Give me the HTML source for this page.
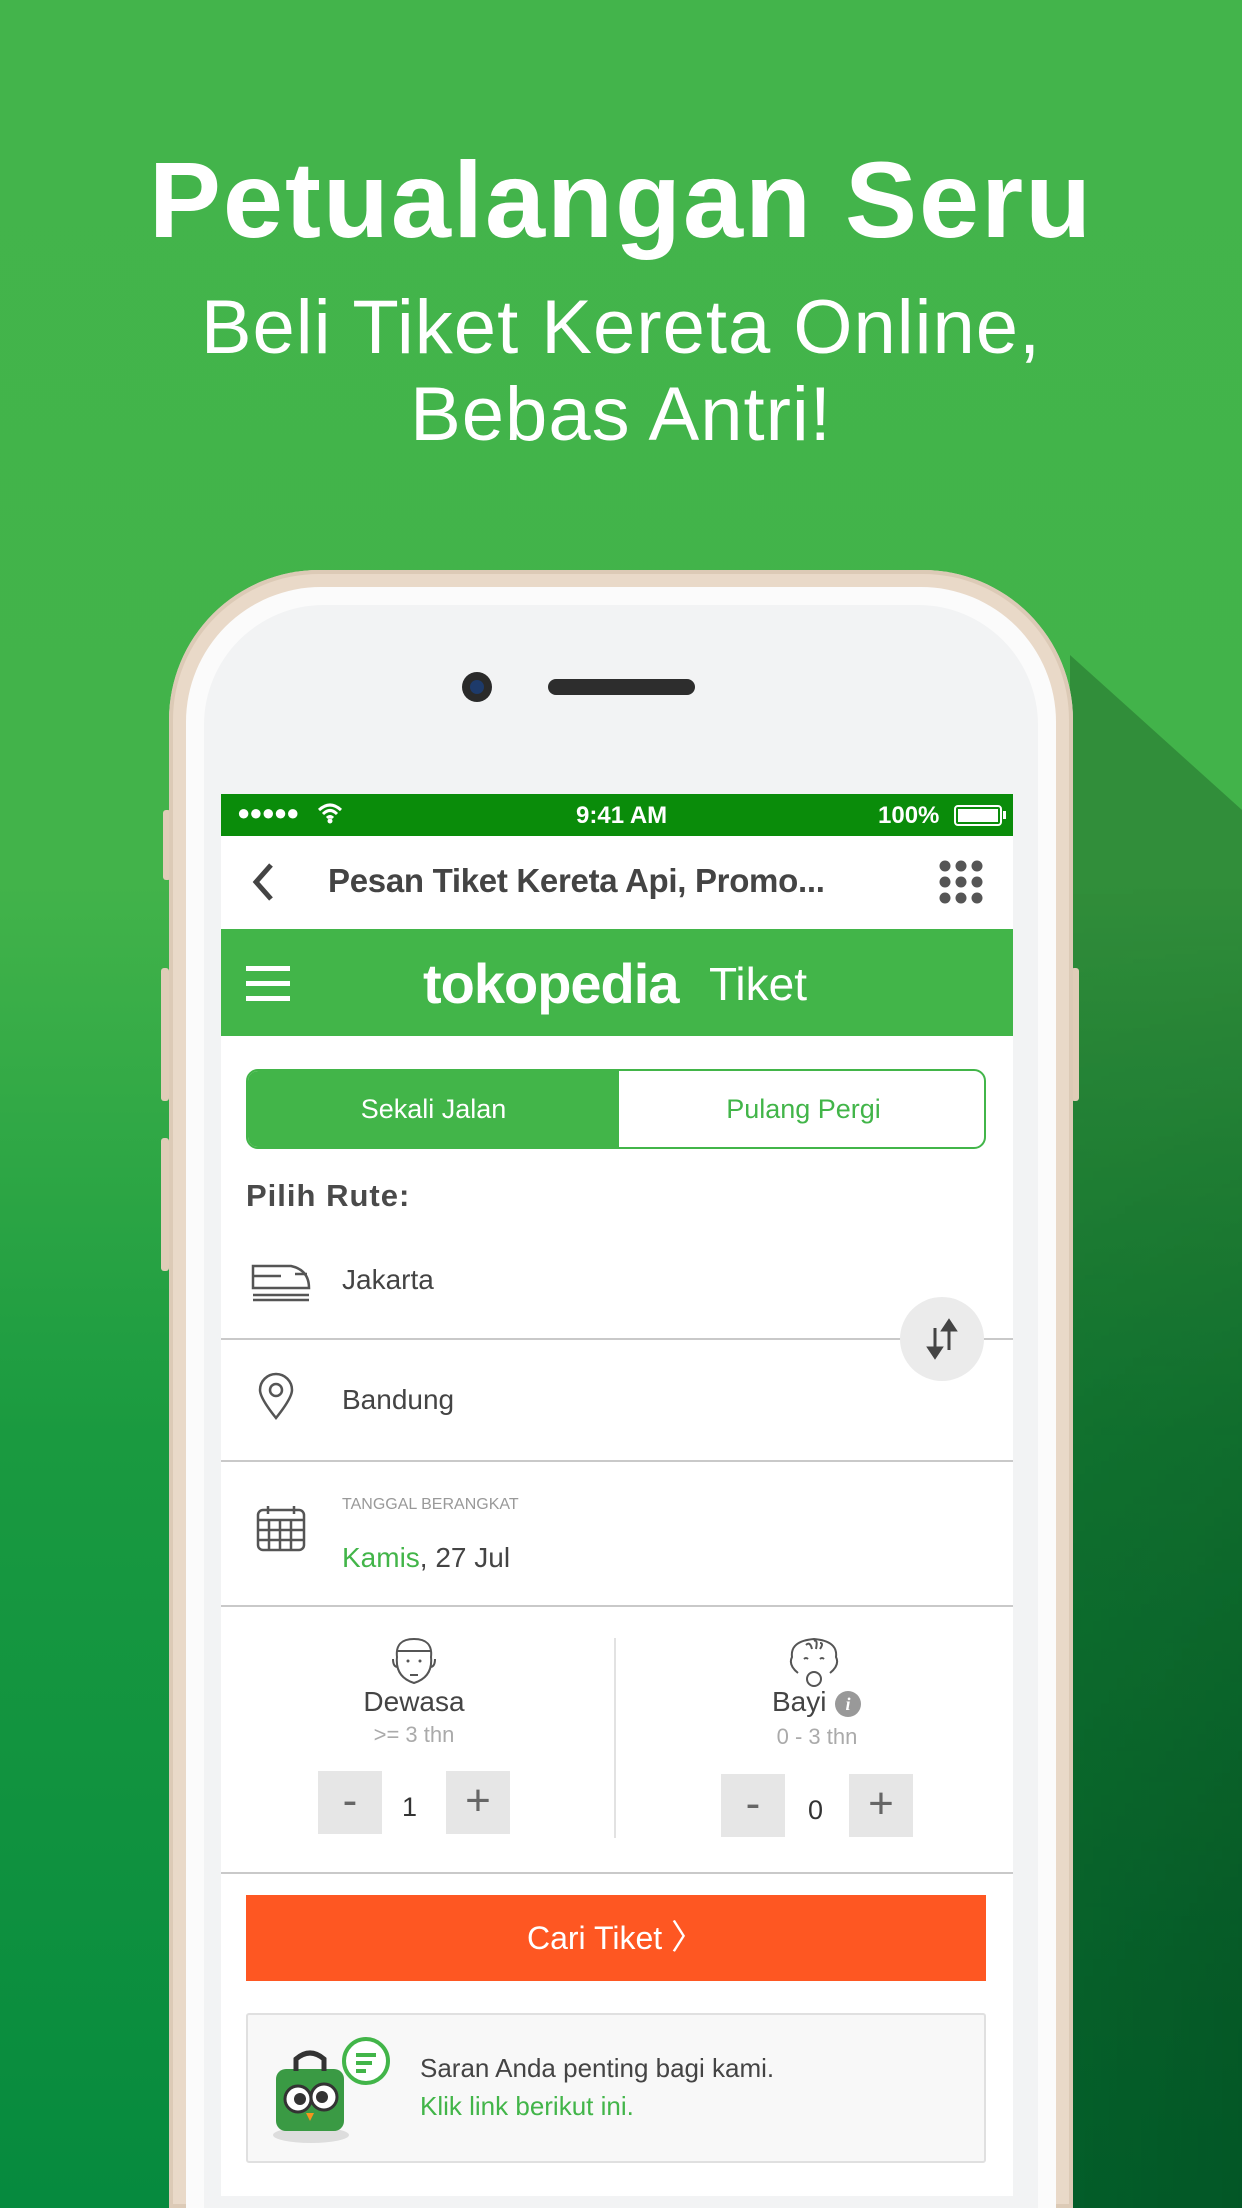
<!DOCTYPE html>
<html style="width:1242px;height:2208px;overflow:hidden"><head><meta charset="utf-8"><style>
*{margin:0;padding:0;box-sizing:border-box}
body{width:1242px;height:2208px;overflow:hidden;position:relative;font-family:"Liberation Sans",sans-serif;background:#42b34a}
.abs{position:absolute}
.bg{left:0;top:0;width:1242px;height:2208px;background:linear-gradient(180deg,#43b44b 0,#42b34a 40%,#1a9a40 65%,#068a3e 100%);}
.darkr{left:0;top:0;width:1242px;height:2208px;background:linear-gradient(90deg,rgba(0,0,0,0) 50%,rgba(0,30,15,.3) 100%);-webkit-mask:linear-gradient(180deg,transparent 40%,#000 90%);mask:linear-gradient(180deg,transparent 40%,#000 90%)}
h1{position:absolute;top:140px;left:0;width:1242px;text-align:center;color:#fff;font-weight:bold;font-size:108px;letter-spacing:2px;line-height:120px}
.sub{position:absolute;left:0;width:1242px;text-align:center;color:#fff;font-size:76px;line-height:90px;letter-spacing:1px}
.phone{left:169px;top:570px;width:904px;height:1638px;border-radius:150px 150px 0 0;background:#e9d9c8;box-shadow:inset 0 0 0 4px #dccab6}
.bez{left:186px;top:587px;width:870px;height:1621px;border-radius:135px 135px 0 0;background:#fbfbfb}
.face{left:204px;top:605px;width:834px;height:1603px;border-radius:120px 120px 0 0;background:#f2f3f4}
.btn{background:#e0cdb8;width:8px;border-radius:3px}
.screen{left:221px;top:794px;width:792px;height:1402px;background:#fff;overflow:hidden}
.status{left:0;top:0;width:792px;height:42px;background:#0a8c0a;color:#fff;font-weight:bold;font-size:24px}
.nav{top:42px;height:93px;width:792px;left:0;background:#fff}
.hdr{top:135px;height:107px;width:792px;left:0;background:#42b549}
.div{left:0;width:792px;height:2px;background:#c9c9c9}
.t{color:#444;font-size:28px}
.cnt{width:64px;height:63px;background:#e6e6e6;color:#666;font-size:44px;text-align:center;line-height:60px}
</style></head><body>
<div class="abs bg"></div>
<div class="abs darkr"></div>
<svg class="abs" style="left:0;top:0" width="1242" height="2208" viewBox="0 0 1242 2208"><polygon points="1070,655 1242,810 1242,2208 1070,2208" fill="rgba(0,30,10,0.25)"/></svg>
<h1>Petualangan Seru</h1>
<div class="sub" style="top:283px">Beli Tiket Kereta Online,</div>
<div class="sub" style="top:370px">Bebas Antri!</div>

<div class="abs btn" style="left:163px;top:810px;height:70px"></div>
<div class="abs btn" style="left:161px;top:968px;height:133px"></div>
<div class="abs btn" style="left:161px;top:1138px;height:133px"></div>
<div class="abs btn" style="left:1071px;top:968px;height:133px"></div>
<div class="abs phone"></div>
<div class="abs bez"></div>
<div class="abs face"></div>
<div class="abs" style="left:462px;top:672px;width:30px;height:30px;border-radius:50%;background:#2a2a2a"><div style="margin:8px;width:14px;height:14px;border-radius:50%;background:#1d3a6a"></div></div>
<div class="abs" style="left:548px;top:679px;width:147px;height:16px;border-radius:8px;background:#2d2d2d"></div>

<div class="abs screen">
 <div class="abs status">
  <span class="abs" style="left:16px;top:6px;font-size:22px;letter-spacing:-1px">●●●●●</span>
  <svg class="abs" style="left:96px;top:8px" width="26" height="22" viewBox="0 0 26 22"><path d="M2 8 Q13 -2 24 8 M6 12 Q13 5 20 12 M10 16 Q13 13 16 16" stroke="#fff" stroke-width="3" fill="none"/><circle cx="13" cy="19" r="2.5" fill="#fff"/></svg>
  <span class="abs" style="left:355px;top:8px">9:41 AM</span>
  <span class="abs" style="left:657px;top:8px">100%</span>
  <div class="abs" style="left:733px;top:11px;width:48px;height:21px;border:2px solid #fff;border-radius:4px;padding:2px"><div style="width:100%;height:100%;background:#fff"></div></div>
  <div class="abs" style="left:782px;top:17px;width:3px;height:8px;background:#fff"></div>
 </div>
 <div class="abs nav">
  <svg class="abs" style="left:30px;top:26px" width="24" height="40"><path d="M20 3 L5 20 L20 37" stroke="#444" stroke-width="5" fill="none"/></svg>
  <div class="abs" style="left:107px;top:26px;font-size:33px;font-weight:bold;color:#444;letter-spacing:-0.3px">Pesan Tiket Kereta Api, Promo...</div>
  <svg class="abs" style="left:718px;top:24px" width="44" height="44"><g fill="#555"><circle cx="6" cy="6" r="5.5"/><circle cx="22" cy="6" r="5.5"/><circle cx="38" cy="6" r="5.5"/><circle cx="6" cy="22" r="5.5"/><circle cx="22" cy="22" r="5.5"/><circle cx="38" cy="22" r="5.5"/><circle cx="6" cy="38" r="5.5"/><circle cx="22" cy="38" r="5.5"/><circle cx="38" cy="38" r="5.5"/></g></svg>
 </div>
 <div class="abs hdr">
  <div class="abs" style="left:25px;top:37px;width:44px;height:5px;background:#fff;box-shadow:0 15px 0 #fff,0 30px 0 #fff"></div>
  <div class="abs" style="left:202px;top:22px;color:#fff;font-size:56px;font-weight:bold;letter-spacing:-1px">tokopedia</div>
  <div class="abs" style="left:488px;top:28px;color:#fff;font-size:46px">Tiket</div>
 </div>
 <div class="abs" style="left:25px;top:275px;width:740px;height:80px;border:2px solid #42b549;border-radius:12px;overflow:hidden">
  <div class="abs" style="left:0;top:0;width:371px;height:80px;background:#42b549;color:#fff;font-size:27px;text-align:center;line-height:76px">Sekali Jalan</div>
  <div class="abs" style="left:371px;top:0;width:369px;height:80px;color:#42b549;font-size:27px;text-align:center;line-height:76px">Pulang Pergi</div>
 </div>
 <div class="abs" style="left:25px;top:384px;font-size:31px;font-weight:bold;color:#4a4a4a;letter-spacing:1px">Pilih Rute:</div>
 <svg class="abs" style="left:30px;top:468px" width="62" height="40" viewBox="0 0 62 40"><g stroke="#555" stroke-width="2.5" fill="none"><path d="M2 4 H40 Q58 8 58 26 H2 Z"/><path d="M2 14 H30 M44 12 H56"/><path d="M2 33 H58 M2 38 H58"/></g></svg>
 <div class="abs t" style="left:121px;top:470px">Jakarta</div>
 <div class="abs div" style="top:544px"></div>
 <div class="abs" style="left:679px;top:503px;width:84px;height:84px;border-radius:50%;background:#ebebeb"></div>
 <svg class="abs" style="left:704px;top:524px" width="34" height="42"><g stroke="#444" stroke-width="3" fill="#444"><path d="M10 10 V38" fill="none"/><path d="M4 30 L10 39 L16 30 Z"/><path d="M24 32 V4" fill="none"/><path d="M18 12 L24 3 L30 12 Z"/></g></svg>
 <svg class="abs" style="left:35px;top:578px" width="40" height="48"><path d="M20 46 Q4 26 4 18 A16 16 0 0 1 36 18 Q36 26 20 46 Z" stroke="#555" stroke-width="2.5" fill="none"/><circle cx="20" cy="18" r="6" stroke="#555" stroke-width="2.5" fill="none"/></svg>
 <div class="abs t" style="left:121px;top:590px">Bandung</div>
 <div class="abs div" style="top:666px"></div>
 <svg class="abs" style="left:35px;top:710px" width="50" height="48"><g stroke="#555" stroke-width="2.5" fill="none"><rect x="2" y="6" width="46" height="40" rx="5"/><path d="M2 16 H48 M2 26 H48 M2 36 H48 M13 16 V46 M24 16 V46 M35 16 V46 M12 2 V10 M38 2 V10"/></g></svg>
 <div class="abs" style="left:121px;top:702px;font-size:16px;color:#999">TANGGAL BERANGKAT</div>
 <div class="abs t" style="left:121px;top:748px"><span style="color:#42b549">Kamis</span>, 27 Jul</div>
 <div class="abs div" style="top:811px"></div>
 <svg class="abs" style="left:170px;top:843px" width="46" height="50"><g stroke="#555" stroke-width="2" fill="none"><path d="M6 20 Q4 2 23 2 Q42 2 40 20 Q42 40 23 46 Q4 40 6 20 Z"/><path d="M6 14 H40"/><path d="M2 22 Q2 30 7 30 M44 22 Q44 30 39 30"/><path d="M19 38 H27"/></g><circle cx="17" cy="24" r="1.5" fill="#555"/><circle cx="29" cy="24" r="1.5" fill="#555"/></svg>
 <div class="abs t" style="left:0;width:386px;text-align:center;top:892px">Dewasa</div>
 <div class="abs" style="left:0;width:386px;text-align:center;top:928px;font-size:22px;color:#aaa">&gt;= 3 thn</div>
 <div class="abs cnt" style="left:97px;top:977px">-</div>
 <div class="abs" style="left:181px;top:998px;font-size:27px;color:#333">1</div>
 <div class="abs cnt" style="left:225px;top:977px">+</div>
 <div class="abs" style="left:393px;top:844px;width:2px;height:200px;background:#e2e2e2"></div>
 <svg class="abs" style="left:565px;top:841px" width="56" height="54"><g stroke="#555" stroke-width="2" fill="none"><path d="M12 38 Q2 30 6 22 Q4 6 28 4 Q52 6 50 22 Q54 30 44 38"/><path d="M20 10 Q24 6 26 14 M28 6 Q32 4 30 14 M34 8 Q38 8 34 14"/><circle cx="28" cy="44" r="7"/><path d="M18 24 Q20 22 22 24 M34 24 Q36 22 38 24"/></g></svg>
 <div class="abs t" style="left:551px;top:892px">Bayi</div>
 <div class="abs" style="left:614px;top:897px;width:26px;height:26px;border-radius:50%;background:#999;color:#fff;font-size:18px;font-weight:bold;font-style:italic;text-align:center;line-height:26px;font-family:'Liberation Serif',serif">i</div>
 <div class="abs" style="left:400px;width:392px;text-align:center;top:930px;font-size:22px;color:#aaa">0 - 3 thn</div>
 <div class="abs cnt" style="left:500px;top:980px">-</div>
 <div class="abs" style="left:587px;top:1001px;font-size:27px;color:#333">0</div>
 <div class="abs cnt" style="left:628px;top:980px">+</div>
 <div class="abs div" style="top:1078px"></div>
 <div class="abs" style="left:25px;top:1101px;width:740px;height:86px;background:#fe5722;color:#fff;font-size:32px;text-align:center;line-height:86px">Cari Tiket <span style="font-size:34px">〉</span></div>
 <div class="abs" style="left:25px;top:1219px;width:740px;height:150px;background:#f8f8f8;border:2px solid #e0e0e0;border-radius:3px">
  <svg class="abs" style="left:18px;top:20px" width="130" height="110"><ellipse cx="45" cy="100" rx="38" ry="8" fill="#ddd"/><rect x="10" y="34" width="68" height="62" rx="10" fill="#3a9a44"/><path d="M30 36 V24 Q44 12 58 24 V36" stroke="#333" stroke-width="5" fill="none"/><circle cx="32" cy="64" r="13" fill="#fff" stroke="#333" stroke-width="3"/><circle cx="58" cy="62" r="13" fill="#fff" stroke="#333" stroke-width="3"/><circle cx="34" cy="64" r="6" fill="#333"/><circle cx="56" cy="62" r="6" fill="#333"/><path d="M40 78 L48 78 L44 86 Z" fill="#f7941d"/><circle cx="100" cy="26" r="22" fill="#fff" stroke="#42b549" stroke-width="4"/><path d="M90 20 H110 M90 28 H106 M90 36 H100" stroke="#42b549" stroke-width="4"/></svg>
  <div class="abs t" style="left:172px;top:38px;font-size:26px">Saran Anda penting bagi kami.</div>
  <div class="abs" style="left:172px;top:76px;font-size:26px;color:#42b549">Klik link berikut ini.</div>
 </div>
</div>
</body></html>
